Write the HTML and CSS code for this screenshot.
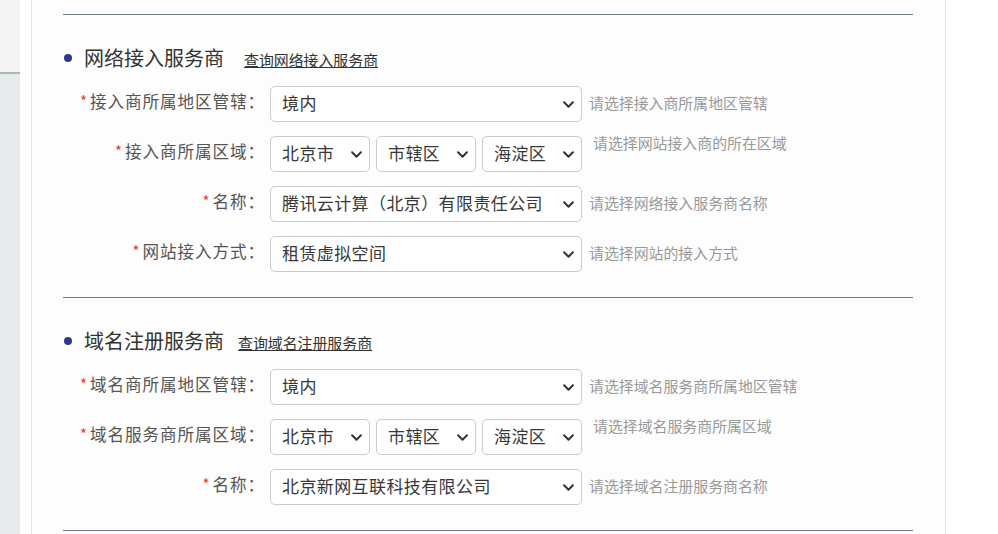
FILE: index.html
```html
<!DOCTYPE html>
<html lang="zh-CN">
<head>
<meta charset="utf-8">
<link rel="stylesheet" href="styles.css">
</head>
<body>
<div class="page">
  <div class="side"><div class="side-top"></div><div class="side-rest"></div></div>
  <div class="gutter"></div>
  <div class="card">
    <div class="rule first"></div>
    <section class="sec">
      <div class="sec-head">
        <span class="dot"></span>
        <h2 class="sec-title">网络接入服务商</h2>
        <a class="sec-link" href="#">查询网络接入服务商</a>
      </div>
      <div class="rows">
        <div class="row">
          <label class="label"><span class="req">*</span>接入商所属地区管辖：</label>
          <div class="sel wide"><span>境内</span><svg class="chev" viewBox="0 0 10 6"><path d="M1 1l4 4 4-4"/></svg></div>
          <span class="hint">请选择接入商所属地区管辖</span>
        </div>
        <div class="row">
          <label class="label"><span class="req">*</span>接入商所属区域：</label>
          <div class="multi">
            <div class="sel small"><span>北京市</span><svg class="chev" viewBox="0 0 10 6"><path d="M1 1l4 4 4-4"/></svg></div>
            <div class="sel small"><span>市辖区</span><svg class="chev" viewBox="0 0 10 6"><path d="M1 1l4 4 4-4"/></svg></div>
            <div class="sel small"><span>海淀区</span><svg class="chev" viewBox="0 0 10 6"><path d="M1 1l4 4 4-4"/></svg></div>
          </div>
          <span class="hint top">请选择网站接入商的所在区域</span>
        </div>
        <div class="row">
          <label class="label"><span class="req">*</span>名称：</label>
          <div class="sel wide"><span>腾讯云计算（北京）有限责任公司</span><svg class="chev" viewBox="0 0 10 6"><path d="M1 1l4 4 4-4"/></svg></div>
          <span class="hint">请选择网络接入服务商名称</span>
        </div>
        <div class="row">
          <label class="label"><span class="req">*</span>网站接入方式：</label>
          <div class="sel wide"><span>租赁虚拟空间</span><svg class="chev" viewBox="0 0 10 6"><path d="M1 1l4 4 4-4"/></svg></div>
          <span class="hint">请选择网站的接入方式</span>
        </div>
      </div>
    </section>
    <div class="rule"></div>
    <section class="sec">
      <div class="sec-head">
        <span class="dot"></span>
        <h2 class="sec-title">域名注册服务商</h2>
        <a class="sec-link tight" href="#">查询域名注册服务商</a>
      </div>
      <div class="rows">
        <div class="row">
          <label class="label"><span class="req">*</span>域名商所属地区管辖：</label>
          <div class="sel wide"><span>境内</span><svg class="chev" viewBox="0 0 10 6"><path d="M1 1l4 4 4-4"/></svg></div>
          <span class="hint">请选择域名服务商所属地区管辖</span>
        </div>
        <div class="row">
          <label class="label"><span class="req">*</span>域名服务商所属区域：</label>
          <div class="multi">
            <div class="sel small"><span>北京市</span><svg class="chev" viewBox="0 0 10 6"><path d="M1 1l4 4 4-4"/></svg></div>
            <div class="sel small"><span>市辖区</span><svg class="chev" viewBox="0 0 10 6"><path d="M1 1l4 4 4-4"/></svg></div>
            <div class="sel small"><span>海淀区</span><svg class="chev" viewBox="0 0 10 6"><path d="M1 1l4 4 4-4"/></svg></div>
          </div>
          <span class="hint top">请选择域名服务商所属区域</span>
        </div>
        <div class="row">
          <label class="label"><span class="req">*</span>名称：</label>
          <div class="sel wide"><span>北京新网互联科技有限公司</span><svg class="chev" viewBox="0 0 10 6"><path d="M1 1l4 4 4-4"/></svg></div>
          <span class="hint">请选择域名注册服务商名称</span>
        </div>
      </div>
    </section>
    <div class="rule"></div>
  </div>
</div>
</body>
</html>
```
FILE: styles.css
```css
html, body {
  margin: 0;
  padding: 0;
  background: #ffffff;
}
body {
  font-family: "Noto Sans CJK SC", "Noto Sans", "Liberation Sans", sans-serif;
  color: #333;
}
.page {
  display: flex;
  width: 998px;
  height: 534px;
  overflow: hidden;
}
.side {
  width: 20px;
  display: flex;
  flex-direction: column;
  flex: none;
}
.side-top {
  height: 72px;
  background: #f4f4f4;
  border-bottom: 2px solid #b4b4b4;
}
.side-rest {
  flex: 1;
  background: #e6ebee;
}
.gutter {
  width: 11px;
  flex: none;
  background: #fff;
}
.card {
  width: 882px;
  flex: none;
  background: #fdfdfd;
  border-left: 1px solid #e4e4e4;
  border-right: 1px solid #e4e4e4;
  padding-left: 31px;
  padding-right: 0;
}
.rule {
  width: 850px;
  height: 1px;
  background: #6e7a88;
}
.rule.first {
  margin-top: 14px;
}
.sec {
  padding-top: 31px;
  padding-bottom: 25px;
}
.sec-head {
  display: flex;
  align-items: center;
  height: 24px;
}
.dot {
  width: 8px;
  height: 8px;
  border-radius: 50%;
  background: #2d3a8c;
  margin-left: 1px;
  margin-right: 12px;
  flex: none;
}
.sec-title {
  margin: 0;
  font-size: 20px;
  font-weight: normal;
  color: #333;
  line-height: 24px;
  white-space: nowrap;
}
.sec-link {
  margin-left: 20px;
  margin-top: 2px;
  font-size: 14.9px;
  color: #333;
  text-decoration: underline;
  white-space: nowrap;
}
.sec-link.tight {
  margin-left: 14px;
}
.rows {
  margin-top: 16px;
  display: flex;
  flex-direction: column;
  gap: 14px;
}
.row {
  display: flex;
  align-items: center;
  height: 36px;
}
.label {
  width: 202px;
  padding-right: 5px;
  flex: none;
  text-align: right;
  font-size: 16.6px;
  color: #555;
  white-space: nowrap;
  margin-top: -6px;
  letter-spacing: 0.9px;
}
.req {
  color: #f0392b;
  font-size: 15px;
  margin-right: 3px;
  vertical-align: 1px;
  letter-spacing: 0;
}
.sel {
  box-sizing: border-box;
  height: 36px;
  border: 1px solid #cccccc;
  border-radius: 5px;
  background: #fff;
  display: flex;
  align-items: center;
  justify-content: space-between;
  padding: 0 7px 3px 11px;
  font-size: 17px;
  color: #383838;
  white-space: nowrap;
  letter-spacing: 0.4px;
}
.sel .chev {
  margin-top: 3px;
}
.sel.wide {
  width: 312px;
}
.sel.small {
  width: 100px;
}
.multi {
  display: flex;
  gap: 6px;
  width: 312px;
}
.chev {
  width: 11px;
  height: 7px;
  flex: none;
  fill: none;
  stroke: #333;
  stroke-width: 1.8;
  stroke-linecap: round;
  stroke-linejoin: round;
}
.hint {
  margin-left: 7px;
  margin-top: -4px;
  font-size: 14.9px;
  color: #999;
  white-space: nowrap;
}
.hint.top {
  align-self: flex-start;
  margin-left: 11px;
  margin-top: -4px;
}
```
